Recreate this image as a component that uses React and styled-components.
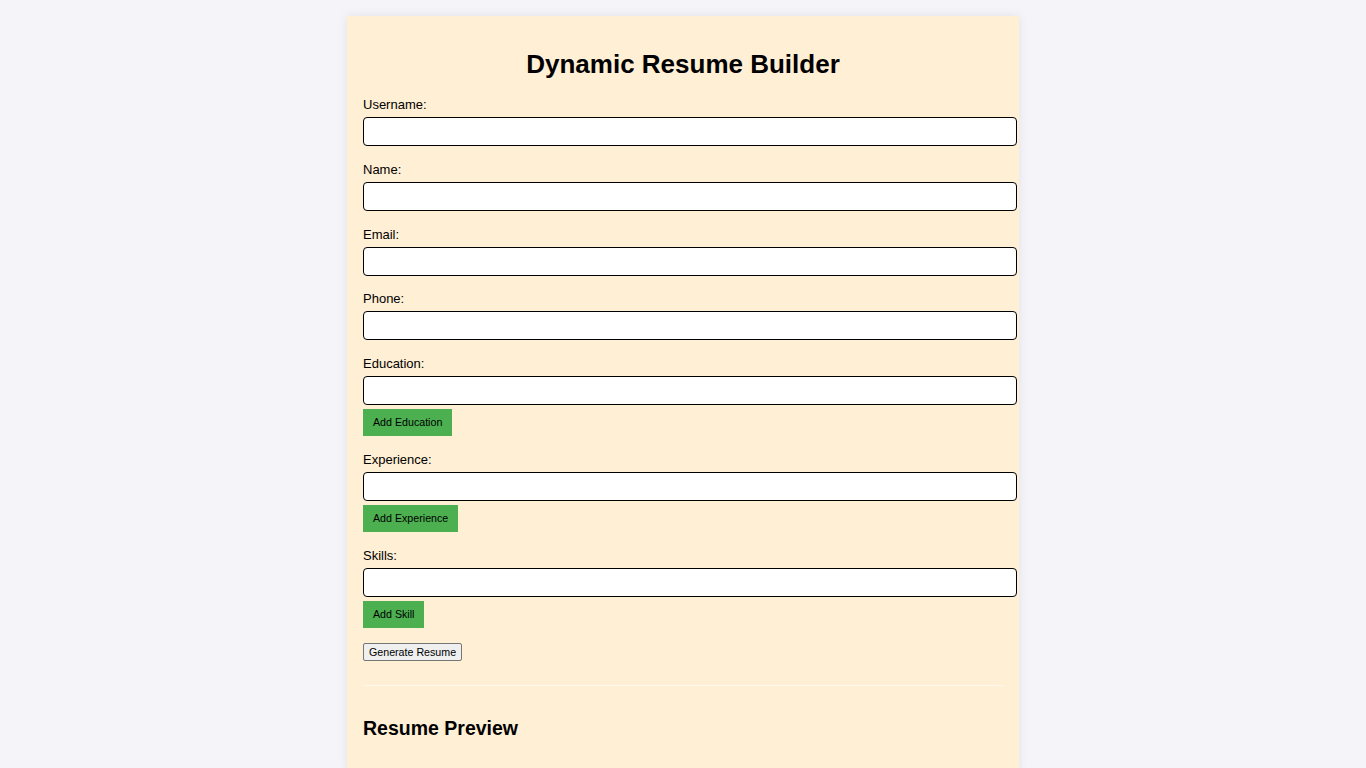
import { useState } from "react";
import styled, { createGlobalStyle } from "styled-components";

const GlobalStyle = createGlobalStyle`
  html {
    overflow-y: scroll;
  }
  html::-webkit-scrollbar {
    width: 15px;
    background: #fafafa;
  }
  html::-webkit-scrollbar-thumb {
    background: #8f8f8f;
    border: 3px solid #fafafa;
    border-top-width: 2px;
    border-bottom-width: 2px;
    border-radius: 8px;
  }
  html::-webkit-scrollbar-button:single-button {
    height: 17px;
    background: #fafafa;
  }
  html, body {
    margin: 0;
    padding: 0;
  }
  body {
    background: #f4f4f9;
    font-family: "Liberation Sans", Arial, sans-serif;
    font-size: 13px;
    color: #000;
  }
`;

const Container = styled.div`
  width: 640px;
  margin: 16px auto;
  padding: 16px;
  background: #ffefd5;
  box-shadow: 0 0 10px rgba(0, 0, 0, 0.08);
`;

const Title = styled.h1`
  text-align: center;
  font-size: 26px;
  margin: 17px 0;
`;

const Field = styled.div`
  margin-bottom: 15.75px;
`;

const Label = styled.label`
  display: block;
  margin-bottom: 5px;
`;

const Input = styled.input`
  display: block;
  width: 100%;
  padding: 6px;
  margin: 0 0 4px;
  border: 1px solid #000;
  border-radius: 4px;
  background: #fff;
  font-family: inherit;
  font-size: 13px;
  line-height: 15px;
  height: 15px;
`;

const AddButton = styled.button`
  display: block;
  margin-bottom: 4px;
  padding: 7px 10px;
  border: none;
  background: #4caf50;
  color: #000;
  font-family: "Liberation Sans", Arial, sans-serif;
  font-size: 10.67px;
  line-height: 13px;
  cursor: pointer;
`;

const GenerateButton = styled.button`
  padding: 1px 5px;
  border: 1px solid #767676;
  border-radius: 2px;
  background: #efefef;
  color: #000;
  font-family: "Liberation Sans", Arial, sans-serif;
  font-size: 10.67px;
  line-height: 14px;
`;

const Actions = styled.div`
  margin-bottom: 24px;
`;

const Divider = styled.hr`
  border: none;
  border-top: 1px solid #fff8ee;
  margin: 0;
`;

const Preview = styled.section`
  padding-top: 15px;
`;

const PreviewTitle = styled.h2`
  font-size: 19.5px;
  margin: 16px 0;
`;

const fields = [
  { name: "username", label: "Username:" },
  { name: "name", label: "Name:" },
  { name: "email", label: "Email:", type: "email" },
  { name: "phone", label: "Phone:", type: "tel" },
  { name: "education", label: "Education:", add: "Add Education" },
  { name: "experience", label: "Experience:", add: "Add Experience" },
  { name: "skills", label: "Skills:", add: "Add Skill" },
];

const App = () => {
  const [values, setValues] = useState({});

  return (
    <>
      <GlobalStyle />
      <Container>
        <Title>Dynamic Resume Builder</Title>
        <form onSubmit={(e) => e.preventDefault()}>
          {fields.map((f) => (
            <Field key={f.name}>
              <Label htmlFor={f.name}>{f.label}</Label>
              <Input
                id={f.name}
                type={f.type || "text"}
                value={values[f.name] || ""}
                onChange={(e) => setValues({ ...values, [f.name]: e.target.value })}
              />
              {f.add && <AddButton type="button">{f.add}</AddButton>}
            </Field>
          ))}
          <Actions>
            <GenerateButton type="submit">Generate Resume</GenerateButton>
          </Actions>
        </form>
        <Divider />
        <Preview>
          <PreviewTitle>Resume Preview</PreviewTitle>
        </Preview>
      </Container>
    </>
  );
};

export default App;
